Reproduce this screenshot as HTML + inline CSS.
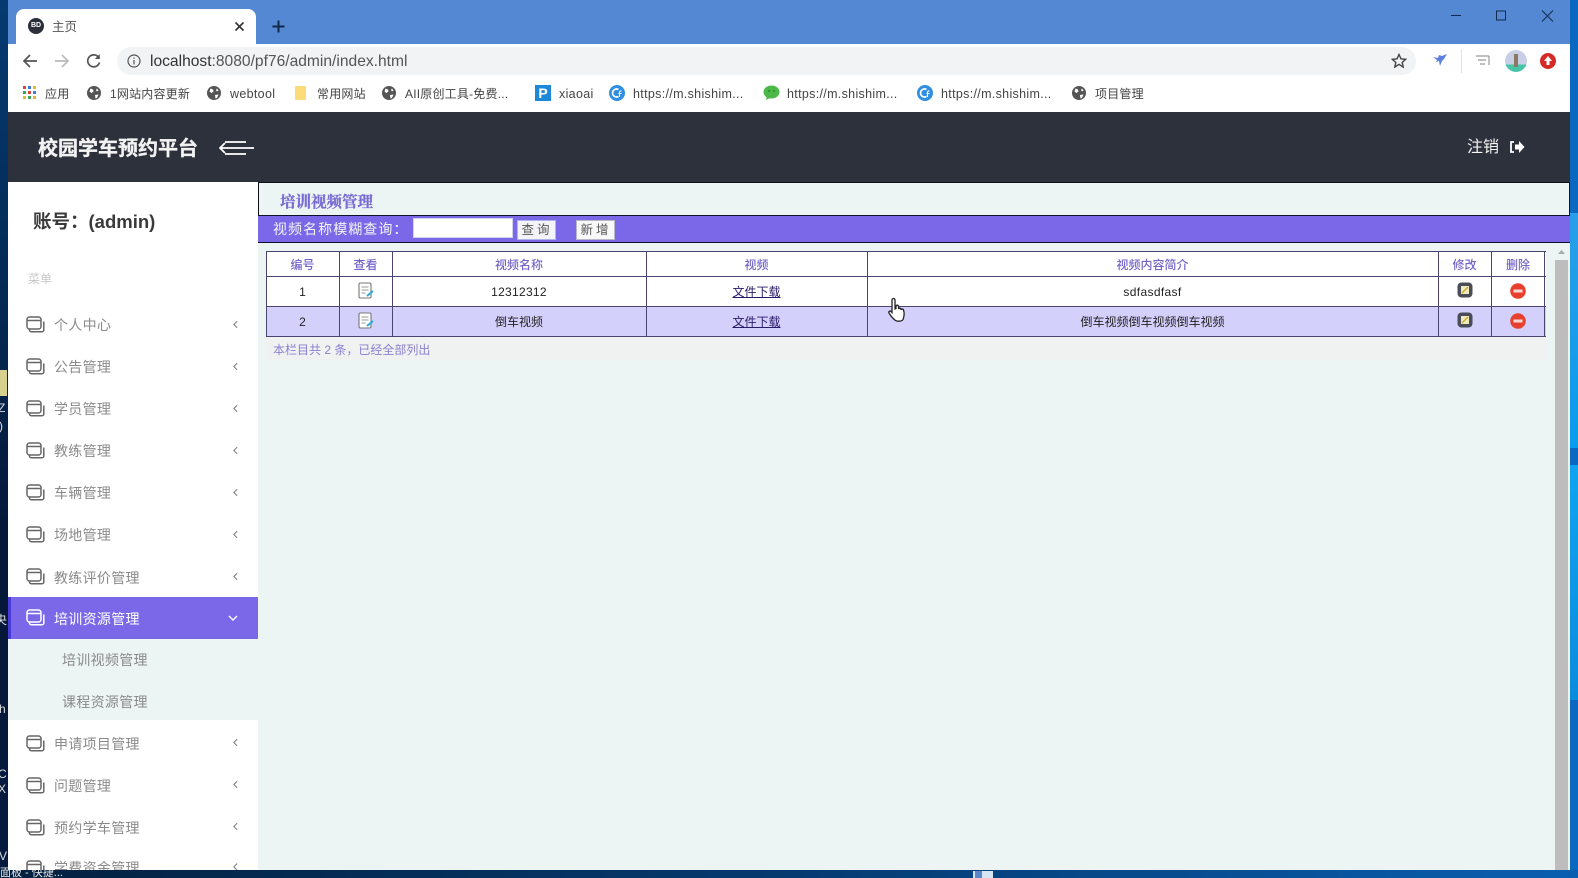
<!DOCTYPE html>
<html lang="zh"><head><meta charset="utf-8"><title>主页</title>
<style>
*{box-sizing:border-box}
html,body{margin:0;padding:0;width:1578px;height:878px;overflow:hidden;background:#06305c;font-family:"Liberation Sans","Noto Sans CJK SC",sans-serif}
.wrap{position:absolute;left:0;top:0;width:1578px;height:878px;overflow:hidden;filter:blur(.35px)}
.a{position:absolute}
.t{position:absolute;white-space:nowrap;line-height:1}
.bm{font-size:12px;color:#444;top:88px;letter-spacing:.2px}
.bl{letter-spacing:.32px;font-size:12.5px}
.m{font-size:14px;color:#8a8a8a;left:54px;letter-spacing:.3px}
.th{position:absolute;top:253px;height:25px;line-height:24px;text-align:center;font-size:12px;color:#7464c8;font-weight:500}
.td{position:absolute;height:29px;line-height:29px;text-align:center;font-size:12px;color:#222}
.v{position:absolute;background:#4a4470;width:1px;top:251px;height:86px}
.h{position:absolute;background:#4a4470;height:1px;left:266px;width:1280px}
</style></head><body><div class="wrap">

<!-- left desktop strip -->
<div class="a" style="left:0;top:0;width:8px;height:878px;background:linear-gradient(#053a70,#04264e 40%,#05183a 60%,#051a3c)"></div>
<div class="a" style="left:0;top:370px;width:7px;height:26px;background:#d8d08e"></div>
<div class="t" style="left:-2px;top:402px;font-size:12px;color:#ddd">Z</div>
<div class="t" style="left:-1px;top:420px;font-size:12px;color:#ddd">)</div>
<div class="t" style="left:-5px;top:614px;font-size:12px;color:#ddd">央</div>
<div class="t" style="left:-1px;top:703px;font-size:12px;color:#ddd">h</div>
<div class="t" style="left:-2px;top:768px;font-size:12px;color:#ddd">C</div>
<div class="t" style="left:-2px;top:783px;font-size:12px;color:#ddd">X</div>
<div class="t" style="left:-1px;top:850px;font-size:12px;color:#ddd">V</div>
<!-- right desktop strip -->
<div class="a" style="left:1570px;top:0;width:8px;height:878px;background:#0a68c0"></div>
<div class="a" style="left:1570px;top:213px;width:8px;height:235px;background:linear-gradient(#2a9ee8,#0a9cec)"></div>
<div class="a" style="left:1570px;top:465px;width:8px;height:235px;background:linear-gradient(#10a4f0,#0a8cdc)"></div>
<!-- taskbar -->
<div class="a" style="left:0;top:870px;width:1578px;height:8px;background:linear-gradient(90deg,#04203f,#053a70 50%,#0a5fb0)"></div>
<div class="a" style="left:973px;top:871px;width:20px;height:7px;background:#d6e4f4"></div>
<div class="a" style="left:975px;top:871px;width:7px;height:7px;background:#5c86c8"></div>
<div class="t" style="left:0;top:868px;font-size:11px;color:#e8e8e8">面板 - 快捷...</div>

<!-- browser chrome -->
<div class="a" style="left:8px;top:0;width:1562px;height:44px;background:#5488d2"></div>
<div class="a" style="left:16px;top:9px;width:240px;height:35px;background:#fff;border-radius:8px 8px 0 0"></div>
<div class="a" style="left:28px;top:18px;width:16px;height:16px;border-radius:50%;background:#2b2f3a;color:#fff;font-size:7px;line-height:16px;text-align:center;font-weight:bold">BD</div>
<div class="t" style="left:52px;top:21px;font-size:12.5px;color:#555">主页</div>
<svg class="a" style="left:234px;top:21px" width="11" height="11" viewBox="0 0 11 11"><path d="M1.5 1.5l8 8M9.5 1.5l-8 8" stroke="#333" stroke-width="1.6"/></svg>
<svg class="a" style="left:272px;top:20px" width="13" height="13" viewBox="0 0 13 13"><path d="M6.5 0.5v12M0.5 6.500h12" stroke="#12294d" stroke-width="2"/></svg>
<svg class="a" style="left:1451px;top:8px" width="110" height="16" viewBox="0 0 110 16" fill="none" stroke="#12294d" stroke-width="1"><path d="M0 7.500h10"/><rect x="45.500" y="3" width="9" height="9"/><path d="M91 2.500l11 11M102 2.500l-11 11"/></svg>

<div class="a" style="left:8px;top:44px;width:1562px;height:68px;background:#fff"></div>
<div class="a" style="left:117px;top:47px;width:1299px;height:28px;border-radius:14px;background:#f1f3f4"></div>
<svg class="a" style="left:21px;top:53px" width="18" height="16" viewBox="0 0 18 16" fill="none" stroke="#555" stroke-width="1.700"><path d="M16 8H3M9 2L3 8l6 6"/></svg>
<svg class="a" style="left:53px;top:53px" width="18" height="16" viewBox="0 0 18 16" fill="none" stroke="#bbb" stroke-width="1.700"><path d="M2 8h13M9 2l6 6-6 6"/></svg>
<svg class="a" style="left:86px;top:53px" width="16" height="16" viewBox="0 0 16 16" fill="none" stroke="#555" stroke-width="1.700"><path d="M13.500 9.500A6 6 0 1 1 12 3.600"/><path d="M13.800 1v5h-5z" fill="#555" stroke="none"/></svg>
<svg class="a" style="left:127px;top:54px" width="14" height="14" viewBox="0 0 14 14" fill="none" stroke="#555" stroke-width="1.200"><circle cx="7" cy="7" r="6"/><path d="M7 6v4.500M7 3.500v1.300"/></svg>
<div class="t" style="left:150px;top:54px;font-size:15.6px;color:#555"><span style="color:#333">localhost</span>:8080/pf76/admin/index.html</div>
<svg class="a" style="left:1391px;top:53px" width="16" height="15" viewBox="0 0 16 15" fill="none" stroke="#444" stroke-width="1.400"><path d="M8 1.500l2 4.300 4.700.5-3.500 3.200 1 4.600L8 11.300l-4.200 2.800 1-4.600L1.300 6.300 6 5.800z"/></svg>
<svg class="a" style="left:1432px;top:53px" width="16" height="15" viewBox="0 0 16 15"><path d="M15 1L10 3 7 2 6 5 1 4l4 3-1 2 3-1 1 5 2-5 2-2z" fill="#5c7fe0"/></svg>
<div class="a" style="left:1461px;top:49px;width:1px;height:24px;background:#e2e2e2"></div>
<svg class="a" style="left:1475px;top:54px" width="16" height="14" viewBox="0 0 16 14" fill="none" stroke="#999" stroke-width="1.200"><path d="M1 2h13M3 6h8M5 10h5M14 2v9"/></svg>
<div class="a" style="left:1505px;top:50px;width:22px;height:22px;border-radius:50%;background:linear-gradient(#c9cfe6 65%,#48c4a8 65%)"></div>
<div class="a" style="left:1514px;top:54px;width:4px;height:13px;background:#8a7a62"></div>
<div class="a" style="left:1540px;top:53px;width:16px;height:16px;border-radius:50%;background:#d52b25"></div>
<svg class="a" style="left:1544px;top:56px" width="8" height="10" viewBox="0 0 8 10"><path d="M4 0l4 5H5.500v4h-3V5H0z" fill="#fff"/></svg>

<!-- bookmarks -->
<svg class="a" style="left:23px;top:86px" width="14" height="14" viewBox="0 0 14 14"><g><rect x="0" y="0" width="3" height="3" fill="#d9453a"/><rect x="5" y="0" width="3" height="3" fill="#3b78e0"/><rect x="10" y="0" width="3" height="3" fill="#e8b52e"/><rect x="0" y="5" width="3" height="3" fill="#3aa757"/><rect x="5" y="5" width="3" height="3" fill="#d9453a"/><rect x="10" y="5" width="3" height="3" fill="#3b78e0"/><rect x="0" y="10" width="3" height="3" fill="#e8b52e"/><rect x="5" y="10" width="3" height="3" fill="#3aa757"/><rect x="10" y="10" width="3" height="3" fill="#e8b52e"/></g></svg>
<div class="t bm" style="left:45px">应用</div>
<svg width="0" height="0" style="position:absolute"><defs><g id="gl"><circle cx="7" cy="7" r="7" fill="#555"/><path d="M3.500 2.500l2.500 1 .5 2-2 1.500-2-1.500zM10 2.500l1.500 2-1.500 1-1-1.500zM8 9l3.500-.5L10 12l-1.500.5z" fill="#fff"/></g>
<g id="cf"><circle cx="8" cy="8" r="8" fill="#2f8fe0"/><path d="M9.500 4.500a4 4 0 1 0 0 7" fill="none" stroke="#fff" stroke-width="1.700"/><path d="M10.500 12V7.500a1.500 1.500 0 0 1 2-1.500M9.500 8.500h3" fill="none" stroke="#fff" stroke-width="1.100"/></g></defs></svg>
<svg class="a" style="left:87px;top:86px" width="14" height="14"><use href="#gl"/></svg>
<div class="t bm" style="left:110px">1网站内容更新</div>
<svg class="a" style="left:207px;top:86px" width="14" height="14"><use href="#gl"/></svg>
<div class="t bm bl" style="left:230px">webtool</div>
<div class="a" style="left:295px;top:86px;width:11px;height:14px;background:#fbdc78;border-radius:1px"></div>
<div class="t bm" style="left:317px">常用网站</div>
<svg class="a" style="left:382px;top:86px" width="14" height="14"><use href="#gl"/></svg>
<div class="t bm" style="left:405px">AII原创工具-免费...</div>
<div class="a" style="left:535px;top:85px;width:16px;height:16px;background:#1e88d8;color:#fff;font-size:14px;line-height:16px;text-align:center;font-weight:bold">P</div>
<div class="t bm bl" style="left:559px">xiaoai</div>
<svg class="a" style="left:609px;top:85px" width="16" height="16"><use href="#cf"/></svg>
<div class="t bm bl" style="left:633px">https://m.shishim...</div>
<svg class="a" style="left:763px;top:85px" width="17" height="15" viewBox="0 0 17 15"><ellipse cx="8.500" cy="7" rx="8" ry="6.500" fill="#4cb848"/><path d="M4 11l-1 4 4-2z" fill="#4cb848"/><circle cx="6" cy="6" r="1" fill="#2c8a2c"/><circle cx="11" cy="6" r="1" fill="#2c8a2c"/></svg>
<div class="t bm bl" style="left:787px">https://m.shishim...</div>
<svg class="a" style="left:917px;top:85px" width="16" height="16"><use href="#cf"/></svg>
<div class="t bm bl" style="left:941px">https://m.shishim...</div>
<svg class="a" style="left:1072px;top:86px" width="14" height="14"><use href="#gl"/></svg>
<div class="t bm" style="left:1095px">项目管理</div>

<!-- app header -->
<div class="a" style="left:8px;top:112px;width:1562px;height:70px;background:#2d313c"></div>
<div class="t" style="left:38px;top:139px;font-size:20px;font-weight:700;color:#f2f2f2;-webkit-text-stroke:.3px #f2f2f2">校园学车预约平台</div>
<svg class="a" style="left:219px;top:139px" width="36" height="18" viewBox="0 0 36 18" fill="none" stroke="#fff" stroke-width="1.800"><path d="M6 3h21M1 9h34M6 15h21M6 4L1 9l5 5"/></svg>
<div class="t" style="left:1467px;top:140px;font-size:16px;color:#f4f4f4">注销</div>
<svg class="a" style="left:1509px;top:140px" width="16" height="14" viewBox="0 0 16 14"><path d="M5 2H2v10h3" fill="none" stroke="#fff" stroke-width="1.800"/><path d="M6 4.500h4V1l5.500 6L10 13V9.500H6z" fill="#fff"/></svg>

<!-- sidebar -->
<div class="a" style="left:8px;top:182px;width:250px;height:688px;background:#fff;overflow:hidden" id="s"></div>
<div class="t" style="left:33px;top:213px;font-size:18.500px;font-weight:700;color:#3a3a3a">账号：(admin)</div>
<div class="t" style="left:28px;top:273px;font-size:12px;color:#c8c8c8">菜单</div>

<div class="a" style="left:8px;top:597px;width:250px;height:42px;background:#7a68e8"></div>
<div class="a" style="left:8px;top:597px;width:3px;height:42px;background:#4a3ad8"></div>
<div class="a" style="left:8px;top:639px;width:250px;height:81px;background:#edf4f4"></div>

<svg width="0" height="0" style="position:absolute"><defs><g id="mi" fill="none" stroke-width="1.500"><rect x="1" y="1" width="14" height="12" rx="2.500"/><path d="M1 4.500h14"/><path d="M3.500 13.500v.5a1.800 1.800 0 0 0 1.800 1.800H16a1.800 1.800 0 0 0 1.800-1.800V5.500"/></g></defs></svg>

<svg class="a" style="left:26px;top:316px" width="19" height="17" stroke="#666"><use href="#mi"/></svg><div class="t m" style="top:318px">个人中心</div>
<svg class="a" style="left:26px;top:358px" width="19" height="17" stroke="#666"><use href="#mi"/></svg><div class="t m" style="top:360px">公告管理</div>
<svg class="a" style="left:26px;top:400px" width="19" height="17" stroke="#666"><use href="#mi"/></svg><div class="t m" style="top:402px">学员管理</div>
<svg class="a" style="left:26px;top:442px" width="19" height="17" stroke="#666"><use href="#mi"/></svg><div class="t m" style="top:444px">教练管理</div>
<svg class="a" style="left:26px;top:484px" width="19" height="17" stroke="#666"><use href="#mi"/></svg><div class="t m" style="top:486px">车辆管理</div>
<svg class="a" style="left:26px;top:526px" width="19" height="17" stroke="#666"><use href="#mi"/></svg><div class="t m" style="top:528px">场地管理</div>
<svg class="a" style="left:26px;top:568px" width="19" height="17" stroke="#666"><use href="#mi"/></svg><div class="t m" style="top:571px">教练评价管理</div>
<svg class="a" style="left:26px;top:609px" width="19" height="17" stroke="#fff"><use href="#mi"/></svg><div class="t m" style="top:612px;color:#fff">培训资源管理</div>
<div class="t m" style="left:62px;top:653px">培训视频管理</div>
<div class="t m" style="left:62px;top:695px">课程资源管理</div>
<svg class="a" style="left:26px;top:735px" width="19" height="17" stroke="#666"><use href="#mi"/></svg><div class="t m" style="top:737px">申请项目管理</div>
<svg class="a" style="left:26px;top:777px" width="19" height="17" stroke="#666"><use href="#mi"/></svg><div class="t m" style="top:779px">问题管理</div>
<svg class="a" style="left:26px;top:819px" width="19" height="17" stroke="#666"><use href="#mi"/></svg><div class="t m" style="top:821px">预约学车管理</div>
<svg class="a" style="left:26px;top:860px" width="19" height="10" stroke="#666"><use href="#mi"/></svg>
<div class="a" style="left:54px;top:860px;height:10px;width:100px;overflow:hidden"><div class="t m" style="left:0;top:1px">学费资金管理</div></div>

<svg class="a" style="left:233px;top:320px" width="5" height="9" viewBox="0 0 6 10" fill="none" stroke="#777" stroke-width="1.200"><path d="M5 1L1 5l4 4"/></svg>
<svg class="a" style="left:233px;top:362px" width="5" height="9" viewBox="0 0 6 10" fill="none" stroke="#777" stroke-width="1.200"><path d="M5 1L1 5l4 4"/></svg>
<svg class="a" style="left:233px;top:404px" width="5" height="9" viewBox="0 0 6 10" fill="none" stroke="#777" stroke-width="1.200"><path d="M5 1L1 5l4 4"/></svg>
<svg class="a" style="left:233px;top:446px" width="5" height="9" viewBox="0 0 6 10" fill="none" stroke="#777" stroke-width="1.200"><path d="M5 1L1 5l4 4"/></svg>
<svg class="a" style="left:233px;top:488px" width="5" height="9" viewBox="0 0 6 10" fill="none" stroke="#777" stroke-width="1.200"><path d="M5 1L1 5l4 4"/></svg>
<svg class="a" style="left:233px;top:530px" width="5" height="9" viewBox="0 0 6 10" fill="none" stroke="#777" stroke-width="1.200"><path d="M5 1L1 5l4 4"/></svg>
<svg class="a" style="left:233px;top:572px" width="5" height="9" viewBox="0 0 6 10" fill="none" stroke="#777" stroke-width="1.200"><path d="M5 1L1 5l4 4"/></svg>
<svg class="a" style="left:228px;top:615px" width="10" height="6" viewBox="0 0 10 6" fill="none" stroke="#fff" stroke-width="1.400"><path d="M1 1l4 4 4-4"/></svg>
<svg class="a" style="left:233px;top:738px" width="5" height="9" viewBox="0 0 6 10" fill="none" stroke="#777" stroke-width="1.200"><path d="M5 1L1 5l4 4"/></svg>
<svg class="a" style="left:233px;top:780px" width="5" height="9" viewBox="0 0 6 10" fill="none" stroke="#777" stroke-width="1.200"><path d="M5 1L1 5l4 4"/></svg>
<svg class="a" style="left:233px;top:822px" width="5" height="9" viewBox="0 0 6 10" fill="none" stroke="#777" stroke-width="1.200"><path d="M5 1L1 5l4 4"/></svg>
<svg class="a" style="left:233px;top:862px" width="5" height="8" viewBox="0 0 6 8" fill="none" stroke="#777" stroke-width="1.200"><path d="M5 1L1 5l4 4"/></svg>

<!-- content -->
<div class="a" style="left:258px;top:182px;width:1312px;height:688px;background:#edf4f4"></div>
<div class="a" style="left:258px;top:182px;width:1312px;height:33px;border:1px solid #10101c;border-bottom:0"></div>
<div class="t" style="left:280px;top:194px;font-size:15.500px;font-weight:700;color:#7a6cd4;-webkit-text-stroke:.3px #7a6cd4;font-family:'Noto Serif CJK SC',serif">培训视频管理</div>
<div class="a" style="left:258px;top:215px;width:1312px;height:28px;background:#7a68e8;border-top:1px solid #10102a;border-bottom:1px solid #10102a"></div>
<div class="t" style="left:273px;top:222px;font-size:14px;color:#f4f4f4;letter-spacing:1.050px">视频名称模糊查询：</div>
<div class="a" style="left:413px;top:218px;width:100px;height:20px;background:#fff;border:1px solid #cfd2ee"></div>
<div class="a" style="left:517px;top:220px;width:39px;height:20px;background:#f4f4f8;border:1px solid #aeb4ee;color:#555;font-size:12.500px;line-height:19px;text-align:center;letter-spacing:3px;padding-left:1px">查询</div>
<div class="a" style="left:576px;top:220px;width:39px;height:20px;background:#f8f8f8;border:1px solid #b8b8c8;color:#555;font-size:12.500px;line-height:19px;text-align:center;letter-spacing:3px;padding-left:1px">新增</div>

<!-- table -->
<div class="a" style="left:266px;top:251px;width:1280px;height:26px;background:#fff"></div>
<div class="a" style="left:266px;top:277px;width:1280px;height:30px;background:#fff"></div>
<div class="a" style="left:266px;top:307px;width:1280px;height:30px;background:#d4d0fc"></div>
<div class="h" style="top:251px"></div><div class="h" style="top:276px"></div><div class="h" style="top:306px"></div><div class="h" style="top:336px"></div>
<div class="v" style="left:266px"></div><div class="v" style="left:339px"></div><div class="v" style="left:392px"></div><div class="v" style="left:646px"></div><div class="v" style="left:867px"></div><div class="v" style="left:1438px"></div><div class="v" style="left:1491px"></div><div class="v" style="left:1544px"></div>

<div class="th" style="left:266px;width:73px">编号</div>
<div class="th" style="left:339px;width:53px">查看</div>
<div class="th" style="left:392px;width:254px">视频名称</div>
<div class="th" style="left:646px;width:221px">视频</div>
<div class="th" style="left:867px;width:571px">视频内容简介</div>
<div class="th" style="left:1438px;width:53px">修改</div>
<div class="th" style="left:1491px;width:54px">删除</div>

<div class="td" style="left:266px;top:278px;width:73px">1</div>
<div class="td" style="left:392px;top:278px;width:254px;letter-spacing:.3px">12312312</div>
<div class="td" style="left:646px;top:278px;width:221px"><span style="text-decoration:underline;color:#2a1a6a">文件下载</span></div>
<div class="td" style="left:867px;top:278px;width:571px;letter-spacing:.35px">sdfasdfasf</div>
<div class="td" style="left:266px;top:308px;width:73px">2</div>
<div class="td" style="left:392px;top:308px;width:254px">倒车视频</div>
<div class="td" style="left:646px;top:308px;width:221px"><span style="text-decoration:underline;color:#2a1a6a">文件下载</span></div>
<div class="td" style="left:867px;top:308px;width:571px">倒车视频倒车视频倒车视频</div>

<svg width="0" height="0" style="position:absolute"><defs>
<g id="vw"><rect x="1" y="1" width="12" height="15" rx="1.500" fill="#fff" stroke="#777" stroke-width="1.100"/><path d="M3.500 5h7M3.500 8h7M3.500 11h4" stroke="#9a9a9a"/><path d="M9 14l6-5" stroke="#2aa8d8" stroke-width="2"/></g>
<g id="ed"><rect x="0.500" y="0.500" width="15" height="15" rx="4" fill="#4a4c58"/><rect x="4" y="4" width="8" height="8" fill="#efe9c0"/><path d="M5 11l6-6" stroke="#c8b030" stroke-width="1.500"/></g>
<g id="dl"><circle cx="8" cy="8" r="7.800" fill="#e8402e"/><rect x="3.500" y="6.500" width="9" height="3" fill="#f6d8d4"/></g>
</defs></svg>
<svg class="a" style="left:358px;top:282px" width="18" height="18"><use href="#vw"/></svg>
<svg class="a" style="left:358px;top:312px" width="18" height="18"><use href="#vw"/></svg>
<svg class="a" style="left:1457px;top:282px" width="16" height="16"><use href="#ed"/></svg>
<svg class="a" style="left:1457px;top:312px" width="16" height="16"><use href="#ed"/></svg>
<svg class="a" style="left:1510px;top:283px" width="16" height="16"><use href="#dl"/></svg>
<svg class="a" style="left:1510px;top:313px" width="16" height="16"><use href="#dl"/></svg>

<div class="a" style="left:266px;top:337px;width:1280px;height:23px;background:#f0f2f2"></div>
<div class="t" style="left:273px;top:344px;font-size:12px;color:#8a80d0">本栏目共 2 条，已经全部列出</div>

<!-- scrollbar -->
<div class="a" style="left:1555px;top:260px;width:13px;height:610px;background:#bdbdbd"></div>
<svg class="a" style="left:1557px;top:249px" width="9" height="6" viewBox="0 0 9 6"><path d="M4.500 1L8 5H1z" fill="#aaa"/></svg>

<!-- cursor -->
<svg class="a" style="left:887px;top:297px" width="20" height="28" viewBox="0 0 20 28"><path d="M5 3a1.500 1.500 0 0 1 3 0v9l1-.5V9.500a1.300 1.300 0 0 1 2.600 0V12a1.300 1.300 0 0 1 2.400 0v1a1.300 1.300 0 0 1 2.500 0c1 3 .5 7-.5 9.500-1 2-6 2-7.500 1-2-1.500-5-5-6.500-7.500-.8-1.500 1-2.500 2-1.500l1 1z" fill="#fff" stroke="#222" stroke-width="1.300"/></svg>
</div></body></html>
